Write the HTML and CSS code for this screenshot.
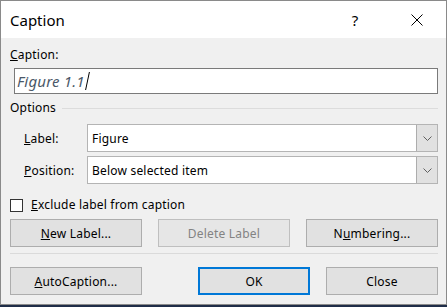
FILE: index.html
```html
<!DOCTYPE html>
<html lang="en">
<head>
    <meta charset="UTF-8">
    <title>Caption</title>
    <link rel="stylesheet" href="styles.css">
</head>
<body>
    <div class="dialog">
        <div class="titlebar">
            <span class="title">Caption</span>
            <span class="help">?</span>
            <span class="close">
                <svg width="12" height="12" viewBox="0 0 12 12"><path d="M0.5 0.5 L11.5 11.5 M11.5 0.5 L0.5 11.5" stroke="#000" stroke-width="1" fill="none"/></svg>
            </span>
        </div>

        <div class="content">
            <div class="field-label"><u>C</u>aption:</div>
            <div class="caption-input"><span class="caption-text">Figure 1.1</span><span class="cursor"></span></div>

            <div class="group-title"><span>Options</span><div class="group-line"></div></div>

            <div class="option-row">
                <label class="option-label"><u>L</u>abel:</label>
                <div class="combo">
                    <span class="combo-value">Figure</span>
                    <span class="combo-btn"><svg width="9" height="5" viewBox="0 0 9 5"><path d="M0.5 0.5 L4.5 4.5 L8.5 0.5" stroke="#606060" fill="none"/></svg></span>
                </div>
            </div>
            <div class="option-row">
                <label class="option-label"><u>P</u>osition:</label>
                <div class="combo">
                    <span class="combo-value">Below selected item</span>
                    <span class="combo-btn"><svg width="9" height="5" viewBox="0 0 9 5"><path d="M0.5 0.5 L4.5 4.5 L8.5 0.5" stroke="#606060" fill="none"/></svg></span>
                </div>
            </div>

            <div class="check-row">
                <span class="checkbox"></span>
                <span><u>E</u>xclude label from caption</span>
            </div>

            <div class="btn-row">
                <button class="btn"><u>N</u>ew Label...</button>
                <button class="btn disabled">Delete Label</button>
                <button class="btn">N<u>u</u>mbering...</button>
            </div>

            <div class="separator"></div>

            <div class="btn-row bottom">
                <button class="btn"><u>A</u>utoCaption...</button>
                <button class="btn small default push">OK</button>
                <button class="btn small">Close</button>
            </div>
        </div>
    </div>
</body>
</html>
```

FILE: styles.css
```css
body {
    margin: 0;
    background-color: #1f2d48;
    font-family: "Noto Sans", Arial, sans-serif;
    font-size: 12px;
    letter-spacing: 0.2px;
    color: #000;
}
.dialog {
    width: 447px;
    height: 305px;
    box-sizing: border-box;
    border: 1px solid #8a8a8a;
    background: #f0f0f0;
}
.titlebar {
    height: 37px;
    background: #fff;
    display: flex;
    align-items: center;
    padding-left: 9px;
}
.title {
    font-size: 15px;
    letter-spacing: 0;
    flex: 1;
    margin-top: 1px;
}
.help {
    font-size: 15px;
    width: 14px;
    margin-right: 49px;
    text-align: center;
}
.close {
    width: 12px;
    height: 12px;
    margin-right: 23px;
    display: flex;
}
.content {
    padding: 0 8px 0 9px;
}
.field-label {
    line-height: 16px;
    margin-top: 9px;
}
.caption-input {
    margin: 5px 0 0 4px;
    height: 26px;
    box-sizing: border-box;
    border: 1px solid #7a7a7a;
    background: #fff;
    display: flex;
    align-items: center;
    padding-left: 2px;
}
.caption-text {
    font-style: italic;
    font-size: 15px;
    color: #4a5868;
}
.cursor {
    width: 1px;
    height: 18px;
    background: #000;
    margin-left: 2px;
    transform: skewX(-12deg);
}
.group-title {
    display: flex;
    align-items: center;
    margin-top: 6px;
    line-height: 16px;
}
.group-line {
    flex: 1;
    height: 1px;
    background: #dcdcdc;
    margin-left: 6px;
}
.option-row {
    display: flex;
    align-items: center;
    margin-top: 4px;
}
.group-title + .option-row {
    margin-top: 8px;
}
.option-label {
    width: 63px;
    margin-left: 14px;
}
.combo {
    flex: 1;
    height: 28px;
    box-sizing: border-box;
    border: 1px solid #b4b4b4;
    background: #fff;
    display: flex;
    align-items: center;
}
.combo-value {
    flex: 1;
    padding-left: 4px;
}
.combo-btn {
    width: 21px;
    height: 26px;
    box-sizing: border-box;
    background: #e1e1e1;
    border-left: 1px solid #adadad;
    display: flex;
    align-items: center;
    justify-content: center;
}
.check-row {
    display: flex;
    align-items: center;
    margin-top: 13px;
    line-height: 16px;
}
.checkbox {
    width: 13px;
    height: 13px;
    box-sizing: border-box;
    border: 1px solid #333;
    background: #fff;
    margin-right: 8px;
}
.btn-row {
    display: flex;
    justify-content: space-between;
    margin-top: 6px;
}
.btn {
    width: 132px;
    height: 28px;
    box-sizing: border-box;
    border: 1px solid #adadad;
    background: #e1e1e1;
    font-family: inherit;
    font-size: 12px;
    letter-spacing: 0.2px;
    color: #000;
    padding: 0;
}
.btn.disabled {
    color: #838383;
    border-color: #bfbfbf;
    background: #e6e6e6;
}
.btn.small {
    width: 112px;
}
.btn.default {
    border: 2px solid #0078d7;
}
.btn-row.bottom {
    justify-content: flex-start;
    margin-top: 13px;
}
.push {
    margin-left: auto;
    margin-right: 16px;
}
.separator {
    height: 1px;
    background: #dadada;
    margin-top: 6px;
}
```
